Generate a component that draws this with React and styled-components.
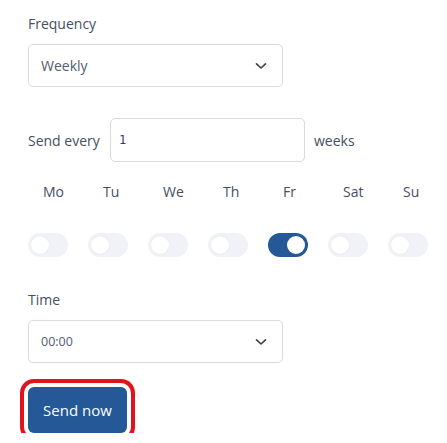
import React, { useState } from 'react';
import styled, { createGlobalStyle } from 'styled-components';

const GlobalStyle = createGlobalStyle`
  body {
    margin: 0;
    background: #ffffff;
    font-family: "Open Sans", Lato, sans-serif;
    color: #464e60;
  }
`;

const Page = styled.div`
  padding: 14px 0 0 28px;
`;

const Label = styled.div`
  font-size: 14px;
  line-height: 20px;
  color: #464e60;
`;

const Select = styled.div`
  margin-top: 10px;
  width: 255px;
  height: 43px;
  box-sizing: border-box;
  border: 1px solid #d9dbe3;
  border-radius: 5px;
  display: flex;
  align-items: center;
  justify-content: space-between;
  padding: 0 15px 0 12px;
  font-size: ${p => p.$small ? '12.5px' : '14px'};
  color: #545c70;
`;

const Row = styled.div`
  margin-top: 31px;
  display: flex;
  align-items: center;
  font-size: 14px;
`;

const RowLabel = styled.span`
  width: 82px;
  white-space: nowrap;
`;

const NumberInput = styled.div`
  width: 195px;
  height: 44px;
  box-sizing: border-box;
  border: 1px solid #d9dbe3;
  border-radius: 5px;
  display: flex;
  align-items: center;
  padding-left: 8px;
  font-family: "DejaVu Sans Mono", "Liberation Mono", monospace;
  font-size: 12px;
  color: #3b3a6b;
`;

const Unit = styled.span`
  margin-left: 9px;
`;

const Days = styled.div`
  margin-top: 20px;
  display: grid;
  grid-template-columns: repeat(7, 60px);
  row-gap: 31px;
`;

const DayName = styled.div`
  padding-left: 15px;
  font-size: 14px;
  line-height: 20px;
`;

const Toggle = styled.button`
  width: 40px;
  height: 24px;
  border: none;
  padding: 3px;
  border-radius: 12px;
  background: ${p => p.$on ? '#245896' : '#f0f2f7'};
  display: flex;
  justify-content: ${p => p.$on ? 'flex-end' : 'flex-start'};
  cursor: pointer;

  &::after {
    content: '';
    width: 18px;
    height: 18px;
    border-radius: 50%;
    background: #ffffff;
    box-shadow: ${p => p.$on ? 'none' : '0 0 0 0.5px #e6e8ef'};
  }
`;

const TimeLabel = styled(Label)`
  margin-top: 33px;
`;

const SendButton = styled.button`
  margin: 24px 0 0 0;
  width: 99px;
  height: 46px;
  border: none;
  border-radius: 6px;
  background: #245896;
  color: #ffffff;
  font-family: "Open Sans", Lato, sans-serif;
  font-size: 15px;
  box-shadow: 0 0 0 4px #ffffff, 0 0 0 8px #e3131e;
  cursor: pointer;
`;

const Chevron = () => (
  <svg width="12" height="8" viewBox="0 0 12 8" fill="none">
    <path d="M1.5 1.8 L6 6 L10.5 1.8" stroke="#3b3f48" strokeWidth="1.6" strokeLinecap="round" strokeLinejoin="round" />
  </svg>
);

const days = ['Mo', 'Tu', 'We', 'Th', 'Fr', 'Sat', 'Su'];

export default function App() {
  const [active, setActive] = useState({ Fr: true });

  return (
    <Page>
      <GlobalStyle />
      <Label>Frequency</Label>
      <Select>
        <span>Weekly</span>
        <Chevron />
      </Select>

      <Row>
        <RowLabel>Send every</RowLabel>
        <NumberInput>1</NumberInput>
        <Unit>weeks</Unit>
      </Row>

      <Days>
        {days.map(d => <DayName key={d}>{d}</DayName>)}
        {days.map(d => (
          <div key={d}>
            <Toggle $on={!!active[d]} onClick={() => setActive(a => ({ ...a, [d]: !a[d] }))} />
          </div>
        ))}
      </Days>

      <TimeLabel>Time</TimeLabel>
      <Select $small>
        <span>00:00</span>
        <Chevron />
      </Select>

      <SendButton>Send now</SendButton>
    </Page>
  );
}
